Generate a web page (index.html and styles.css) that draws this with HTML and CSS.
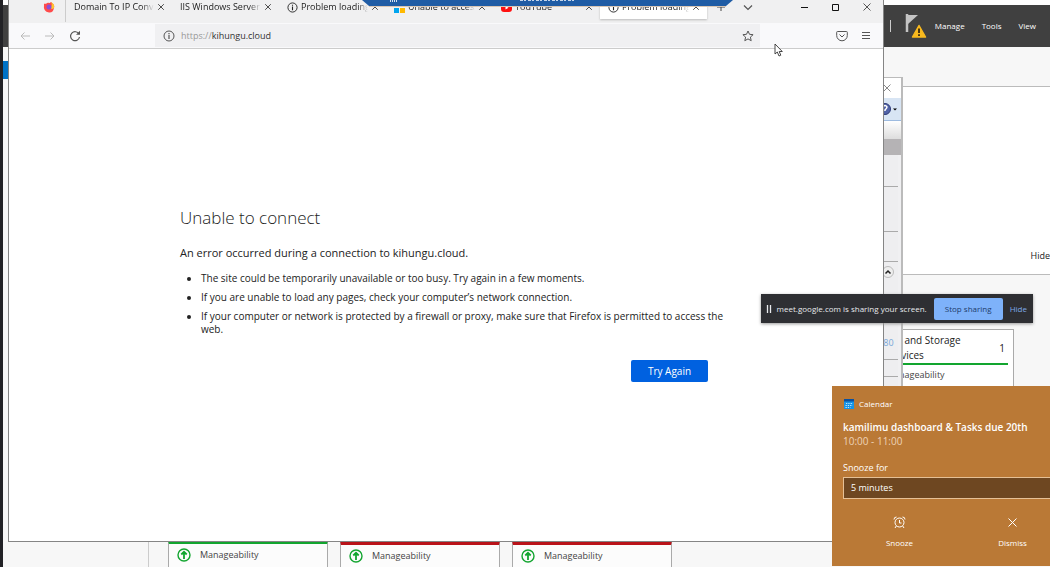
FILE: index.html
```
<!DOCTYPE html>
<html lang="en">
<head>
<meta charset="utf-8">
<title>Problem loading page</title>
<link rel="stylesheet" href="styles.css">
</head>
<body>
<svg class="defs" aria-hidden="true">
  <symbol id="x" viewBox="0 0 10 10"><path d="M1.500 1.500l7 7M8.500 1.500l-7 7" fill="none" stroke="currentColor"/></symbol>
  <symbol id="info" viewBox="0 0 12 12"><circle cx="6" cy="6" r="5" fill="none" stroke="currentColor"/><path d="M6 5v4M6 3v1.200" stroke="currentColor" stroke-width="1.200"/></symbol>
  <symbol id="up" viewBox="0 0 14 14"><circle cx="7" cy="7" r="6" fill="none" stroke="currentColor" stroke-width="1.400"/><path d="M7 11V4.500M4.300 6.500L7 3.800l2.700 2.700" fill="none" stroke="currentColor" stroke-width="1.800"/></symbol>
</svg>
<div class="desktop">
  <section class="manager">
    <nav class="manager-nav">
      <span class="nav-line"></span>
      <button class="flag" aria-label="Notifications"><svg width="22" height="26" viewBox="0 0 22 26"><path d="M2 1v18" stroke="#c4c4c4" stroke-width="2.500"/><path d="M3 2h10L3 11z" fill="#c4c4c4"/><path d="M14 12.500L20.500 24H7.500z" fill="#f8b91e" stroke="#f8b91e" stroke-width="1.500" stroke-linejoin="round"/><path d="M14 15.500v4.500M14 21.200v1.800" stroke="#4a3510" stroke-width="2"/></svg></button>
      <a href="#manage">Manage</a><a href="#tools">Tools</a><a href="#view">View</a>
    </nav>
    <div class="side-item"></div>
    <div class="welcome"><a href="#hide">Hide</a></div>
    <div class="roles">
      <article class="tile storage"><header><h2>File and Storage Services</h2><span>1</span></header><p>Manageability</p></article>
      <div class="servers">
        <article class="tile ok"><svg width="14" height="14"><use href="#up"/></svg><span>Manageability</span></article>
        <article class="tile bad"><svg width="14" height="14"><use href="#up"/></svg><span>Manageability</span></article>
        <article class="tile bad"><svg width="14" height="14"><use href="#up"/></svg><span>Manageability</span></article>
      </div>
    </div>
  </section>

  <section class="console">
    <div class="console-title"><svg width="10" height="10"><use href="#x"/></svg></div>
    <div class="console-help"><svg width="20" height="14" viewBox="0 0 20 14"><circle cx="3" cy="7" r="5.500" fill="#5163a8" stroke="#2f3b78"/><path d="M1 5q2-3 4 0q0 1-2 3v1" fill="none" stroke="#fff" stroke-width="1.500"/><path d="M11 6.500h4l-2 2z" fill="#000"/></svg></div>
    <div class="console-head"></div>
    <div class="console-bar"></div>
    <div class="console-body">
      <i></i><i></i><i></i>
      <svg class="collapse" width="12" height="12" viewBox="0 0 12 12"><circle cx="6" cy="6" r="5.500" fill="#eee" stroke="#bbb"/><path d="M3.500 7.500L6 5l2.500 2.500" fill="none" stroke="#222" stroke-width="1.500"/></svg>
      <span class="port">:80</span>
      <i></i><i></i>
    </div>
  </section>

  <main class="browser">
    <div class="tabs">
      <svg class="fox" width="12" height="12" viewBox="0 0 12 12"><path d="M1 3Q2 2 3 3Q4 1 7 2Q8 0 9 2Q12 4 11 7Q10 12 6 11.500Q0 11 1 3" fill="#ff4b4b"/><path d="M8 1Q12 3 11 7Q9 9 7 7Q10 4 8 1" fill="#ffc52e"/><circle cx="6" cy="6" r="2.500" fill="#8a4fd6"/></svg>
      <div class="tab first"><span>Domain To IP Converter</span><button aria-label="Close tab"><svg width="8" height="8"><use href="#x"/></svg></button></div>
      <div class="tab"><span>IIS Windows Server</span><button aria-label="Close tab"><svg width="8" height="8"><use href="#x"/></svg></button></div>
      <div class="tab"><svg width="11" height="11"><use href="#info"/></svg><span>Problem loading page</span><button aria-label="Close tab"><svg width="8" height="8"><use href="#x"/></svg></button></div>
      <div class="tab"><svg width="11" height="11" viewBox="0 0 11 11"><path d="M0 0h5v5H0z" fill="#f25022"/><path d="M6 0h5v5H6z" fill="#7fba00"/><path d="M0 6h5v5H0z" fill="#00a4ef"/><path d="M6 6h5v5H6z" fill="#ffb900"/></svg><span>Unable to access site</span><button aria-label="Close tab"><svg width="8" height="8"><use href="#x"/></svg></button></div>
      <div class="tab"><svg width="11" height="11" viewBox="0 0 11 11"><rect y="1.500" width="11" height="8.500" rx="3" fill="#f11"/><path d="M4.500 4v3.500L7.500 5.700z" fill="#fff"/></svg><span>YouTube</span><button aria-label="Close tab"><svg width="8" height="8"><use href="#x"/></svg></button></div>
      <div class="tab active"><svg width="11" height="11"><use href="#info"/></svg><span>Problem loading page</span><button aria-label="Close tab"><svg width="8" height="8"><use href="#x"/></svg></button></div>
      <button class="icon plus" aria-label="New tab"><svg width="10" height="10" viewBox="0 0 10 10"><path d="M5 1v8M1 5h8" stroke="#444"/></svg></button>
      <button class="icon list" aria-label="List tabs"><svg width="10" height="10" viewBox="0 0 10 10"><path d="M1 3.500l4 4 4-4" fill="none" stroke="#555" stroke-width="1.200"/></svg></button>
      <div class="window-buttons">
        <button class="icon" aria-label="Minimize"><svg width="9" height="9" viewBox="0 0 9 9"><path d="M1 4.500h7" stroke="#111"/></svg></button>
        <button class="icon" aria-label="Maximize"><svg width="9" height="9" viewBox="0 0 9 9"><path d="M1.500 1.500h6v6h-6z" fill="none" stroke="#111"/></svg></button>
        <button class="icon" aria-label="Close"><svg width="10" height="10"><use href="#x"/></svg></button>
      </div>
    </div>
    <div class="toolbar">
      <button class="icon faded" aria-label="Back"><svg width="12" height="12" viewBox="0 0 12 12"><path d="M11 6H2M5.500 2.500L2 6l3.500 3.500" fill="none" stroke="currentColor"/></svg></button>
      <button class="icon faded" aria-label="Forward"><svg width="12" height="12" viewBox="0 0 12 12"><path d="M1 6h9M6.500 2.500L10 6 6.500 9.500" fill="none" stroke="currentColor"/></svg></button>
      <button class="icon" aria-label="Reload"><svg width="12" height="12" viewBox="0 0 12 12"><path d="M10 4A4.500 4.500 0 1 0 10.500 7" fill="none" stroke="currentColor" stroke-width="1.200"/><path d="M11 .8v4H7z" fill="currentColor"/></svg></button>
      <div class="address">
        <svg width="12" height="12"><use href="#info"/></svg>
        <a class="url" href="https://kihungu.cloud"><span>https://</span>kihungu.cloud</a>
        <button class="icon" aria-label="Bookmark"><svg width="12" height="12" viewBox="0 0 12 12"><path d="M6 1l1.500 3.300 3.600.4-2.700 2.400.8 3.600L6 8.900l-3.200 1.800.8-3.600L.9 4.700l3.600-.4z" fill="none" stroke="currentColor" stroke-linejoin="round"/></svg></button>
      </div>
      <button class="icon pocket" aria-label="Save to Pocket"><svg width="12" height="12" viewBox="0 0 12 12"><path d="M1.500 1.500h9a.8.800 0 0 1 .8.800V5.500A5.300 5.300 0 0 1 .7 5.500V2.300a.8.800 0 0 1 .8-.8zM3.500 4.500L6 7l2.500-2.500" fill="none" stroke="currentColor"/></svg></button>
      <button class="icon" aria-label="Menu"><svg width="10" height="10" viewBox="0 0 10 10"><path d="M1 1.500h8M1 4.500h8M1 7.500h8" stroke="currentColor"/></svg></button>
    </div>
    <div class="page">
      <div class="error">
        <h1>Unable to connect</h1>
        <p>An error occurred during a connection to kihungu.cloud.</p>
        <ul>
          <li>The site could be temporarily unavailable or too busy. Try again in a few moments.</li>
          <li>If you are unable to load any pages, check your computer’s network connection.</li>
          <li>If your computer or network is protected by a firewall or proxy, make sure that Firefox is permitted to access the web.</li>
        </ul>
        <button class="retry">Try Again</button>
      </div>
    </div>
  </main>

  <div class="remote"><svg width="371" height="7" viewBox="0 0 371 7"><path d="M0 0h371l-7 6H7z" fill="#1f5ca5"/><path d="M7 6.500h357" stroke="#d9c6b4"/><path d="M28 1h7" stroke="#d5e2f2" stroke-width="2" stroke-dasharray="1 1"/><path d="M158 .5h54" stroke="#c5d5ea" stroke-dasharray="3 1 2 2"/></svg></div>

  <div class="sharing">
    <svg width="6" height="10" viewBox="0 0 6 10"><path d="M1.500 1v8M4.500 1v8" stroke="#e8eaed" stroke-width="1.300"/></svg>
    <span>meet.google.com is sharing your screen.</span>
    <button class="stop">Stop sharing</button>
    <button class="hide">Hide</button>
  </div>

  <aside class="toast">
    <header><svg width="12" height="12" viewBox="0 0 12 12"><path d="M1 1h10v10H1z" fill="#1594e8"/><path d="M1 1h10v2.500H1z" fill="#0a50a0"/><path d="M3 5.500h7M2.500 7.500h7M2.500 9.500h5" stroke="#bfe5ff" stroke-dasharray="1.300 1"/></svg><span>Calendar</span></header>
    <h2>kamilimu dashboard &amp; Tasks due 20th</h2>
    <p>10:00 - 11:00</p>
    <label for="snooze">Snooze for</label>
    <select id="snooze"><option>5 minutes</option><option>10 minutes</option></select>
    <div class="actions">
      <button><svg width="13" height="13" viewBox="0 0 13 13"><circle cx="6.500" cy="6.500" r="4.500" fill="none" stroke="currentColor"/><path d="M6.500 4v3h2M1 3.500Q1 1 3.500 1M9.500 1Q12 1 12 3.500M3.300 10L2 12M9.700 10L11 12" fill="none" stroke="currentColor"/></svg>Snooze</button>
      <button><svg width="13" height="13" viewBox="0 0 13 13"><path d="M2.500 2.500l8 8M10.500 2.500l-8 8" fill="none" stroke="currentColor"/></svg>Dismiss</button>
    </div>
  </aside>

  <svg class="pointer" width="9" height="14" viewBox="0 0 9 14"><path d="M1 1v10l2.300-2 1.700 4 1.800-.8L5.200 8.500H8.300z" fill="#fff" stroke="#333" stroke-width=".9"/></svg>
</div>
</body>
</html>
```
FILE: styles.css
```
* { box-sizing: border-box; }
html, body { height: 100%; margin: 0; }
body { font: 9px/14px "Open Sans", "Noto Sans", sans-serif; color: #222; }
button { border: 0; padding: 0; background: none; font: inherit; color: inherit; }
a { color: inherit; text-decoration: none; }
h1, h2, p, ul { margin: 0; padding: 0; font-weight: 400; }
svg { display: block; flex: none; }
.defs { position: absolute; width: 0; height: 0; }

.desktop { position: relative; height: 100%; overflow: hidden; background: #222226; }

/* Server Manager */
.manager { position: absolute; inset: 0 0 0 3px; display: flex; flex-direction: column; background: #f7f7f7; border-top: 5px solid #fff; }
.manager-nav { display: flex; align-items: center; justify-content: flex-end; height: 42px; padding-right: 14px; background: #404040; color: #fff; font-size: 8px; }
.manager-nav a { margin-left: 17px; }
.manager-nav a:first-of-type { margin-left: 8px; }
.nav-line { width: 1px; height: 12px; background: #ccc; margin-right: 14px; }
.side-item { width: 6px; height: 18px; margin-top: 14px; background: #0072c6; flex: none; }
.welcome { display: flex; align-items: flex-end; justify-content: flex-end; height: 189px; margin: 7px -1px 0 145px; padding: 11px 0; background: #fff; border: 1px solid #bbb; flex: none; }
.roles { display: flex; flex-direction: column; justify-content: space-between; flex: 1; margin: 0 0 0 145px; padding: 54px 36px 0 19px; border-left: 1px solid #ccc; }
.tile { width: 160px; background: #fff; border: 1px solid #aaa; color: #444; }
.storage { align-self: flex-end; height: 90px; padding: 3px 5px; }
.storage header { display: flex; justify-content: space-between; align-items: center; padding: 0 3px 0 26px; border-bottom: 2px solid #12a52f; color: #222; font-size: 10px; }
.storage h2 { width: 86px; font-size: 10px; line-height: 15px; }
.storage p { padding: 3px 0 0 26px; }
.servers { display: flex; gap: 12px; }
.servers .tile { display: flex; gap: 9px; height: 26px; padding: 2px 8px; border-bottom: 0; background: #fcfcfc; }
.servers .ok { border-top: 3px solid #12a52f; }
.servers .bad { border-top: 4px solid #b91319; }
.servers svg { color: #12a52f; margin-top: 2px; }
.servers span { line-height: 18px; }

/* Console window */
.console { position: absolute; top: 77px; left: 700px; width: 203px; height: 460px; display: flex; flex-direction: column; align-items: stretch; background: #f0f0f2; border: 1px solid #bbb; border-right-width: 2px; }
.console-title, .console-help { display: flex; align-items: center; height: 20px; padding-left: 181px; background: #fff; color: #888; }
.console-help { height: 23px; background: #d8e5f4; border-bottom: 1px solid #9dbbe0; }
.console-head { height: 18px; background: linear-gradient(#fff, #ddd); }
.console-bar { height: 16px; background: #b5b3b5; }
.console-body { display: flex; flex-direction: column; flex: 1; margin-right: 3px; padding-left: 180px; background: #eeeef0; }
.console-body i { height: 1px; margin-top: 31px; background: #aaa; }
.console-body i + i { margin-top: 44px; }
.console-body i + i + i { margin-top: 29px; }
.collapse { margin: 4px 0 0 1px; }
.port { margin-top: 58px; color: #78a7d8; }
.console-body .port + i { margin-top: 9px; }
.console-body .port + i + i { margin-top: 16px; }

/* Firefox window */
.browser { position: absolute; top: 0; left: 8px; right: 166px; bottom: 25px; display: flex; flex-direction: column; background: #fff; border: solid #858585; border-width: 0 1px 1px; }
.tabs { display: flex; height: 23px; background: #f0f0f1; }
.fox { margin: 1px 10px 0 34px; }
.tab { display: flex; align-items: center; gap: 3px; width: 107px; height: 14px; padding: 0 7px 0 8px; }
.tab.first { border-left: 1px solid #ccc; height: 22px; padding-bottom: 8px; }
.tab span { flex: 1; overflow: hidden; white-space: nowrap; mask-image: linear-gradient(90deg, #000 85%, transparent); }
.tab.active { height: 19px; padding-bottom: 5px; background: #fff; box-shadow: 0 1px 2px #bbb; }
.icon { display: flex; align-items: center; justify-content: center; height: 14px; color: #555; }
.plus { width: 28px; }
.list { width: 26px; }
.window-buttons { display: flex; gap: 22px; margin: 0 11px 0 auto; color: #333; }
.toolbar { display: flex; align-items: center; gap: 13px; height: 26px; padding: 0 12px 0 10px; background: #f9f9fb; border-bottom: 1px solid #ccc; }
.faded { color: #bbb; }
.toolbar .icon + .address { margin-left: 61px; }
.address { display: flex; align-items: center; gap: 6px; flex: 1; height: 23px; padding: 0 6px 0 8px; background: #f0f0f2; color: #555; }
.address .url { flex: 1; color: #333; }
.url span { color: #999; }
.pocket { margin-left: 63px; }
.page { flex: 1; padding: 157px 158px 0 171px; font-size: 10px; }
.error { display: flex; flex-direction: column; }
.error h1 { font-size: 17px; font-weight: 300; line-height: 24px; }
.error p { margin-top: 14px; font-size: 11px; line-height: 18px; }
.error ul { margin-top: 10px; padding-left: 21px; }
.error li { margin-bottom: 6px; line-height: 13px; }
.retry { align-self: flex-end; width: 77px; height: 22px; margin: 18px 17px 0 0; border-radius: 2px; background: #0061e0; color: #fff; }

/* Remote desktop connection bar */
.remote { position: absolute; top: 0; left: 362px; }

/* Screen sharing bar */
.sharing { position: absolute; top: 294px; right: 17px; display: flex; align-items: center; height: 29px; padding: 0 6px 0 5px; background: #2e2f33; color: #e8eaed; box-shadow: 0 1px 3px #999; font-size: 8px; }
.sharing span { margin: 0 7px 0 5px; }
.stop { width: 69px; height: 22px; border-radius: 2px; background: #7eb2fa; color: #203c6b; }
.hide { margin-left: 7px; color: #7fa9e8; }

/* Calendar notification */
.toast { position: absolute; top: 386px; right: -30px; width: 248px; display: flex; flex-direction: column; padding: 11px; background: #ba7936; color: #fff; }
.toast header { display: flex; align-items: center; gap: 4px; font-size: 8px; }
.toast h2 { margin-top: 9px; font-size: 10px; font-weight: 600; line-height: 14px; }
.toast p { color: #eed3b7; font-size: 10px; line-height: 14px; }
.toast label { margin-top: 13px; }
.toast select { height: 22px; margin-top: 2px; padding: 0 7px; appearance: none; border: 1px solid #e5c096; border-radius: 0; background: #6e4721; color: #fff; font: inherit; }
.actions { display: flex; margin-top: 17px; padding-bottom: 4px; font-size: 8px; }
.actions button { display: flex; flex: 1; flex-direction: column; align-items: center; gap: 7px; height: 35px; }
.pointer { position: absolute; top: 43px; left: 774px; }
```
